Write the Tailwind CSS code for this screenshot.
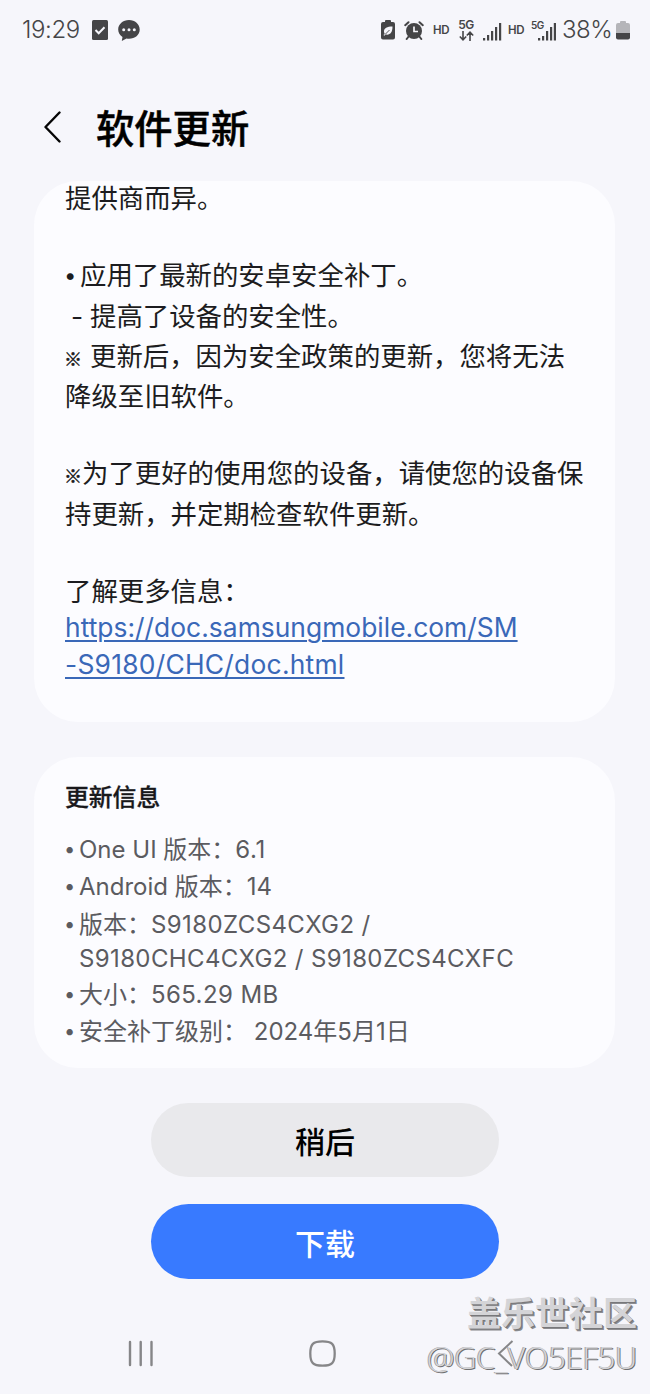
<!DOCTYPE html>
<html lang="zh-CN">
<head>
    <meta charset="UTF-8">
    <meta name="viewport" content="width=device-width, initial-scale=1.0">
    <title>软件更新</title>
    <script src="https://cdn.jsdelivr.net/npm/@tailwindcss/browser@4"></script>
</head>
<body class="bg-[#f6f6fb] font-[Inter,'Noto_Sans_CJK_SC',sans-serif] text-[#1c1c20]">
    <div class="relative flex h-[1394px] w-[650px] flex-col overflow-hidden">
        <!-- Status bar -->
        <div class="flex h-[60px] shrink-0 items-center justify-between pl-[22px] pr-[20px] text-[#454547]">
            <div class="flex items-center">
                <span class="w-[70px] text-[24px] font-[350] leading-none tracking-[-0.4px]">19:29</span>
                <svg class="h-[20px] w-[16px]" viewBox="0 0 16 20" fill="none">
                    <rect width="16" height="20" rx="1.5" fill="#454547"/>
                    <path d="M3.5 10l3.2 3.2 5.8-6" stroke="#f6f6fb" stroke-width="2"/>
                </svg>
                <svg class="ml-[10px] h-[21px] w-[22px]" viewBox="0 0 22 21">
                    <path d="M11 0C5 0 .2 4.200.2 9.500c0 3.200 1.600 5.800 4.300 7.500L3.800 21l4.700-2.400c.8.2 1.600.2 2.500.2 6 0 10.700-4 10.700-9.300S17 0 11 0z" fill="#454547"/>
                    <circle cx="5.700" cy="9.700" r="1.500" fill="#f6f6fb"/>
                    <circle cx="11" cy="9.700" r="1.500" fill="#f6f6fb"/>
                    <circle cx="16.300" cy="9.700" r="1.500" fill="#f6f6fb"/>
                </svg>
            </div>
            <div class="flex items-center">
                <svg class="h-[20px] w-[14px]" viewBox="0 0 14 20">
                    <path d="M4 2V1q0-1 1-1h4q1 0 1 1v1h2q2 0 2 2v13.500q0 2-2 2H2q-2 0-2-2V4q0-2 2-2z" fill="#454547"/>
                    <path d="M11.500 6.500C6 6.500 3 8 3 11.500c0 1 .3 1.800.7 2.300L2.500 15l.8.800 1.400-1.300c4.500.8 6.800-2 6.800-8z" fill="#f6f6fb"/>
                    <path d="M4 14.500L8.500 10" stroke="#454547" stroke-width=".9"/>
                </svg>
                <svg class="ml-[9px] h-[19px] w-[20px]" viewBox="0 0 20 19" fill="none" stroke="#454547">
                    <circle cx="10" cy="10" r="8" fill="#454547" stroke="none"/>
                    <path d="M1.200 4.200L4.500 1.200M18.800 4.200L15.500 1.200M5 15l-2.300 3M15 15l2.300 3" stroke-width="2" stroke-linecap="round"/>
                    <path d="M10 5.500v5h4" stroke="#f6f6fb" stroke-width="1.700"/>
                </svg>
                <span class="ml-[9px] w-[17px] pt-[2px] text-[11.500px] font-semibold leading-none tracking-[-0.3px]">HD</span>
                <div class="ml-[8px] flex w-[16px] flex-col items-center pt-[1px]">
                    <span class="text-[12px] font-semibold leading-[10px] tracking-[-0.5px]">5G</span>
                    <svg class="mt-[1px] h-[10px] w-[15px]" viewBox="0 0 15 10" fill="none" stroke="#454547" stroke-width="1.600">
                        <path d="M4 0v8.500M.8 5.500L4 8.800l3.200-3.300M11 10V1.500M7.800 4.500L11 1.200l3.200 3.300"/>
                    </svg>
                </div>
                <svg class="ml-[9px] mt-[3px] h-[18px] w-[19px]" viewBox="0 0 19 18" fill="#454547">
                    <rect x="0" y="15" width="2.200" height="2.500"/>
                    <rect x="4" y="12" width="2.200" height="5.500"/>
                    <rect x="8" y="8" width="2.200" height="9.500"/>
                    <rect x="12" y="4" width="2.200" height="13.500"/>
                    <rect x="16" y="0" width="2.200" height="17.500"/>
                </svg>
                <span class="ml-[6px] w-[17px] pt-[2px] text-[11.500px] font-semibold leading-none tracking-[-0.3px]">HD</span>
                <div class="relative ml-[7px] h-[21px] w-[24px]">
                    <span class="absolute -left-px top-0 text-[10px] font-semibold leading-[10px] tracking-[-0.5px]">5G</span>
                    <svg class="absolute bottom-0 right-0 h-[18px] w-[19px]" viewBox="0 0 19 18" fill="#454547">
                        <rect x="1" y="15" width="2.200" height="2.500"/>
                        <rect x="5" y="13" width="2.200" height="4.500"/>
                        <rect x="9" y="8" width="2.200" height="9.500"/>
                        <rect x="13" y="4" width="2.200" height="13.500"/>
                        <rect x="16.800" y="0" width="2.200" height="17.500"/>
                    </svg>
                </div>
                <span class="ml-[6px] w-[51px] whitespace-nowrap text-[24px] font-[350] leading-none tracking-[-0.5px]">38%</span>
                <svg class="ml-[3px] h-[19px] w-[14px]" viewBox="0 0 14 19">
                    <path d="M4 2V1q0-1 1-1h4q1 0 1 1v1h2q2 0 2 2v8H0V4q0-2 2-2z" fill="#b5b5b9"/>
                    <path d="M0 12h14v4.500q0 2-2 2H2q-2 0-2-2z" fill="#454547"/>
                </svg>
            </div>
        </div>

        <!-- Title -->
        <div class="flex h-[121px] shrink-0 items-center pl-[44px] pt-[16px]">
            <svg class="mb-[4px] h-[32px] w-[17px]" viewBox="0 0 17 32" fill="none" stroke="#050505" stroke-width="2.400" stroke-linecap="round" stroke-linejoin="round">
                <path d="M15.500 1.500L1.500 16l14 14.500"/>
            </svg>
            <h1 class="ml-[35px] pt-[2px] text-[38.300px] font-medium leading-none text-black [-webkit-text-stroke:0.5px_black]">软件更新</h1>
        </div>

        <!-- Release notes -->
        <div class="mx-[34px] h-[541px] w-[581px] shrink-0 overflow-hidden rounded-[44px] bg-[#fcfcff] px-[31px] text-[26.400px]">
            <div class="-mt-[3px] whitespace-nowrap leading-[40.300px]">
                <p>提供商而异。</p>
                <p class="mt-[37px] flex"><span class="-ml-px w-[16px] text-[22px]">•</span>应用了最新的安卓安全补丁。</p>
                <p class="flex"><span class="w-[25px] pl-[6px]">-</span>提高了设备的安全性。</p>
                <p class="flex"><span class="-ml-px h-[40px] w-[26px] pt-[2px] font-['Noto_Sans_CJK_SC'] text-[18px] [-webkit-text-stroke:0.5px_#1c1c20]">※</span>更新后，因为安全政策的更新，您将无法</p>
                <p>降级至旧软件。</p>
                <p class="mt-[37px] flex"><span class="-ml-px h-[40px] w-[18px] pt-[2px] font-['Noto_Sans_CJK_SC'] text-[18px] [-webkit-text-stroke:0.5px_#1c1c20]">※</span>为了更好的使用您的设备，请使您的设备保</p>
                <p>持更新，并定期检查软件更新。</p>
                <p class="mt-[37px]">了解更多信息：</p>
            </div>
            <a href="#" class="-mt-[2px] block whitespace-nowrap leading-[36.500px] text-[#3a68b8] underline decoration-2 underline-offset-[3px]"><span class="block tracking-[0.02px]">https://doc.samsungmobile.com/SM</span><span class="block tracking-[0.25px]">-S9180/CHC/doc.html</span></a>
        </div>

        <!-- Update info -->
        <div class="mx-[34px] mt-[35px] h-[311px] w-[581px] shrink-0 rounded-[44px] bg-[#fcfcff] px-[31px] pt-[22px]">
            <h2 class="text-[23.800px] font-medium leading-[37px] text-[#18181b] [-webkit-text-stroke:0.3px_#18181b]">更新信息</h2>
            <ul class="mt-[15px] whitespace-nowrap text-[24px] leading-[37.300px] text-[#5b5b60]">
                <li class="flex"><span class="-ml-px w-[15px] text-[20px]">•</span><span>One UI 版本：<span class="tracking-[0.6px]">6.1</span></span></li>
                <li class="flex"><span class="-ml-px w-[15px] text-[20px]">•</span><span>Android 版本：14</span></li>
                <li class="flex"><span class="-ml-px w-[15px] text-[20px]">•</span><span>版本：<span class="tracking-[0.4px]">S9180ZCS4CXG2 /</span></span></li>
                <li class="-mt-px pl-[14px] leading-[34px] tracking-[0.370px]">S9180CHC4CXG2 / S9180ZCS4CXFC</li>
                <li class="flex"><span class="-ml-px w-[15px] text-[20px]">•</span><span>大小：<span class="tracking-[0.4px]">565.29 MB</span></span></li>
                <li class="flex"><span class="-ml-px w-[15px] text-[20px]">•</span><span>安全补丁级别： 2024年5月1日</span></li>
            </ul>
        </div>

        <!-- Actions -->
        <div class="mt-[35px] flex flex-col items-center gap-[27px]">
            <button class="h-[74px] w-[348px] rounded-full bg-[#e9e9ec] pt-[5px] text-[30px] font-medium text-black">稍后</button>
            <button class="h-[75px] w-[348px] rounded-full bg-[#387aff] pt-[5px] text-[30px] font-medium text-white">下载</button>
        </div>

        <!-- Navigation bar -->
        <div class="mt-[61px] flex items-start pl-[128px]">
            <svg class="h-[27px] w-[26px]" viewBox="0 0 26 27" stroke="#868688" stroke-width="2.400" stroke-linecap="round">
                <path d="M2 2v23M12.700 2v23M23.500 2v23"/>
            </svg>
            <svg class="ml-[155px] h-[27px] w-[27px]" viewBox="0 0 27 27" fill="none" stroke="#868688" stroke-width="2.300">
                <path d="M13.500 1.300c9.500 0 12.200 2.700 12.200 12.200s-2.700 12.200-12.200 12.200S1.300 23 1.300 13.500 4 1.300 13.500 1.300z"/>
            </svg>
            <svg class="ml-[161px] h-[28px] w-[17px]" viewBox="0 0 17 28" fill="none" stroke="#868688" stroke-width="2">
                <path d="M15.500 1L2 13.500l13 12.500"/>
            </svg>
        </div>

        <!-- Watermark -->
        <div class="absolute right-[13px] top-[1295px] flex flex-col items-end whitespace-nowrap text-[#d4d4d7]">
            <span class="text-[34px] font-bold leading-[38px] [text-shadow:1px_1px_0_#77777a,2px_2px_0_#8c8c8f]">盖乐世社区</span>
            <span class="mt-[3px] font-['Open_Sans'] text-[31px] font-light leading-[42px] tracking-[-0.35px] [text-shadow:1px_1px_0_#707072,-1px_0_0_#a5a5a8]">@GC_VO5EF5U</span>
        </div>
    </div>
</body>
</html>
